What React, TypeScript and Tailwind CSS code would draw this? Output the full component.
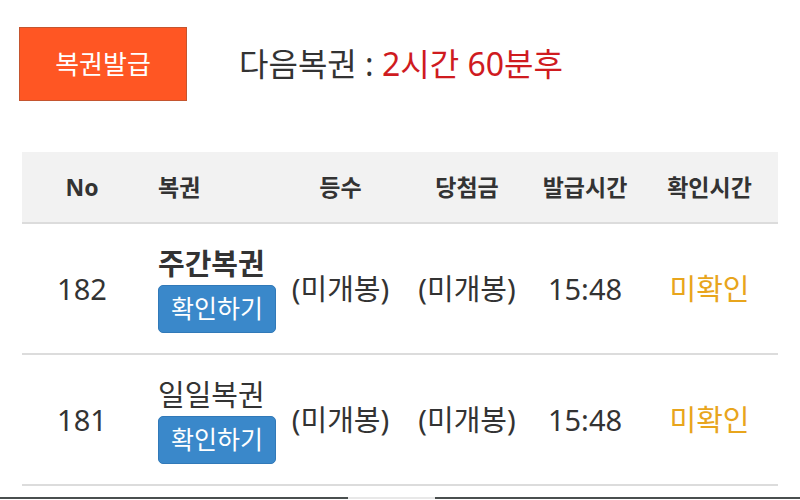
const rows = [
  { no: 182, name: "주간복권", bold: true, rank: "(미개봉)", prize: "(미개봉)", issued: "15:48", checked: "미확인" },
  { no: 181, name: "일일복권", bold: false, rank: "(미개봉)", prize: "(미개봉)", issued: "15:48", checked: "미확인" },
];

const cols = "grid grid-cols-[120px_134px_129px_124px_112px_137px]";

export default function App() {
  return (
    <div
      className="h-[500px] w-[800px] overflow-hidden bg-white text-[#333]"
      style={{ fontFamily: "'Noto Sans', 'Noto Sans CJK KR', sans-serif" }}
    >
      <div className="flex items-center pl-[19px] pt-[27px]">
        <button className="flex h-[74px] w-[168px] items-center justify-center border border-[#c4552f] bg-[#ff5623] text-[26px] text-white">
          복권발급
        </button>
        <div className="ml-[52px] whitespace-nowrap text-[32px] leading-none">
          다음복권 : <span className="text-[#cf1b1f]">2시간 60분후</span>
        </div>
      </div>

      <div className="mx-[22px] mt-[51px]">
        <div className={`${cols} h-[72px] items-center border-b-2 border-[#dcdcdc] bg-[#f2f2f2] text-[23px] font-bold`}>
          <div className="text-center">No</div>
          <div className="pl-[16px]">복권</div>
          <div className="text-center">등수</div>
          <div className="text-center">당첨금</div>
          <div className="text-center">발급시간</div>
          <div className="text-center">확인시간</div>
        </div>
        {rows.map((r) => (
          <div key={r.no} className={`${cols} h-[131px] items-center border-b-2 border-[#dcdcdc] text-[29px]`}>
            <div className="text-center">{r.no}</div>
            <div className="flex flex-col items-start pl-[16px]">
              <div className={`whitespace-nowrap leading-[38px] ${r.bold ? "font-bold" : ""}`}>{r.name}</div>
              <button className="mt-[2px] flex h-[48px] w-[118px] items-center justify-center rounded-[5px] border border-[#3179b8] bg-[#3a88ca] text-[25px] text-white">
                확인하기
              </button>
            </div>
            <div className="whitespace-nowrap text-center">{r.rank}</div>
            <div className="whitespace-nowrap text-center">{r.prize}</div>
            <div className="text-center">{r.issued}</div>
            <div className="text-center text-[#e8a51c]">{r.checked}</div>
          </div>
        ))}
      </div>

      <div className="mt-[11px] flex h-[2px]">
        <div className="w-[348px] bg-[#4a4f4f]" />
        <div className="w-[87px] bg-[#e8e8e8]" />
        <div className="flex-1 bg-[#4a4f4f]" />
      </div>
    </div>
  );
}
